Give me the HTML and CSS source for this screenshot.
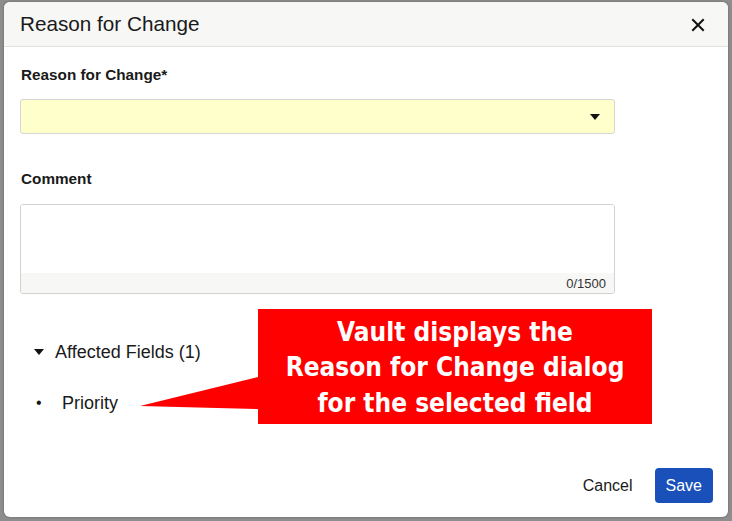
FILE: index.html
```html
<!DOCTYPE html>
<html>
<head>
<meta charset="utf-8">
<link rel="stylesheet" href="styles.css">
</head>
<body>
<div class="backdrop">
  <div class="dialog">
    <div class="header">
      <h1 class="title">Reason for Change</h1>
      <svg class="close" width="14" height="14" viewBox="0 0 14 14"><path d="M2 2 L12 12 M12 2 L2 12" stroke="#111" stroke-width="2" stroke-linecap="square"/></svg>
    </div>
    <div class="body">
      <div class="label">Reason for Change*</div>
      <div class="select"><span class="caret"></span></div>
      <div class="label comment-label">Comment</div>
      <div class="textarea">
        <div class="ta-input"></div>
        <div class="ta-count">0/1500</div>
      </div>
      <div class="affected"><span class="tri"></span>Affected Fields (1)</div>
      <ul class="fields"><li><span class="dot">•</span>Priority</li></ul>
    </div>
    <div class="footer">
      <span class="cancel">Cancel</span>
      <span class="save">Save</span>
    </div>
    <div class="callout">
      <svg class="pointer" width="120" height="36" viewBox="0 0 120 36"><polygon points="0,31 118,2 118,34 " fill="#ff0000"/></svg>
      <div class="callout-text">Vault displays the<br>Reason for Change dialog<br>for the selected field</div>
    </div>
  </div>
</div>
</body>
</html>
```
FILE: styles.css
```css
html, body { margin: 0; padding: 0; }
body {
  font-family: "Liberation Sans", Arial, sans-serif;
  color: #1a1a1a;
  background: #8e8e8e;
  width: 732px;
  height: 521px;
  overflow: hidden;
}
.backdrop {
  padding: 2px 4px 4px 4px;
  height: 521px;
  box-sizing: border-box;
}
.dialog {
  position: relative;
  background: #fff;
  width: 724px;
  height: 515px;
  border-radius: 6px;
  display: flex;
  flex-direction: column;
  box-shadow: 0 0 3px rgba(0,0,0,0.3);
  overflow: hidden;
}
.header {
  height: 45px;
  background: #f7f7f5;
  border-bottom: 1px solid #e2e2e2;
  display: flex;
  align-items: center;
  justify-content: space-between;
  padding: 0 23px 0 16px;
  box-sizing: border-box;
  flex: none;
}
.title {
  margin: 0;
  font-size: 20.7px;
  font-weight: normal;
  color: #1a1a1a;
}
.close { display: block; margin-top: 1px; }
.body {
  padding: 18px 0 0 17px;
  flex: 1;
}
.label {
  font-size: 15.3px;
  font-weight: bold;
  line-height: 19px;
  color: #1a1a1a;
}
.select {
  margin-top: 15px;
  margin-left: -1px;
  width: 595px;
  height: 35px;
  box-sizing: border-box;
  background: #ffffcc;
  border: 1px solid #d6d6d6;
  border-radius: 3px;
  display: flex;
  align-items: center;
  justify-content: flex-end;
  padding-right: 14px;
}
.caret {
  width: 0; height: 0;
  border-left: 5px solid transparent;
  border-right: 5px solid transparent;
  border-top: 6px solid #111;
}
.comment-label { margin-top: 35px; }
.textarea {
  margin-top: 16px;
  margin-left: -1px;
  width: 595px;
  height: 90px;
  box-sizing: border-box;
  border: 1px solid #d2d2d2;
  border-radius: 3px;
  display: flex;
  flex-direction: column;
  overflow: hidden;
}
.ta-input { flex: 1; background: #fff; }
.ta-count {
  height: 20px;
  background: #f7f7f5;
  text-align: right;
  font-size: 13px;
  line-height: 22px;
  padding-right: 8px;
  color: #333;
}
.affected {
  margin-top: 47px;
  margin-left: 13px;
  font-size: 18px;
  line-height: 22px;
  display: flex;
  align-items: center;
  color: #1a1a1a;
}
.tri {
  width: 0; height: 0;
  border-left: 5px solid transparent;
  border-right: 5px solid transparent;
  border-top: 6px solid #111;
  margin-right: 11px;
}
.fields {
  list-style: none;
  margin: 29px 0 0 0;
  padding: 0 0 0 15px;
  font-size: 18px;
  line-height: 22px;
}
.fields li { display: flex; }
.dot { width: 26px; font-size: 16px; }
.footer {
  flex: none;
  display: flex;
  justify-content: flex-end;
  align-items: center;
  padding: 0 15px 14px 0;
  gap: 22px;
}
.cancel { font-size: 16px; color: #1a1a1a; }
.save {
  background: #1a50ba;
  color: #fff;
  font-size: 16px;
  height: 35px;
  line-height: 35px;
  padding: 0 11px;
  border-radius: 4px;
}
.callout {
  position: absolute;
  left: 254px;
  top: 307px;
  width: 394px;
  height: 115px;
  background: #ff0000;
  display: flex;
  align-items: center;
  justify-content: center;
}
.pointer {
  position: absolute;
  left: -118px;
  top: 66px;
}
.callout-text {
  color: #fff;
  font-family: "DejaVu Sans", sans-serif;
  font-stretch: condensed;
  font-weight: bold;
  font-size: 26px;
  line-height: 35.5px;
  text-align: center;
  margin-top: 3px;
}
```
